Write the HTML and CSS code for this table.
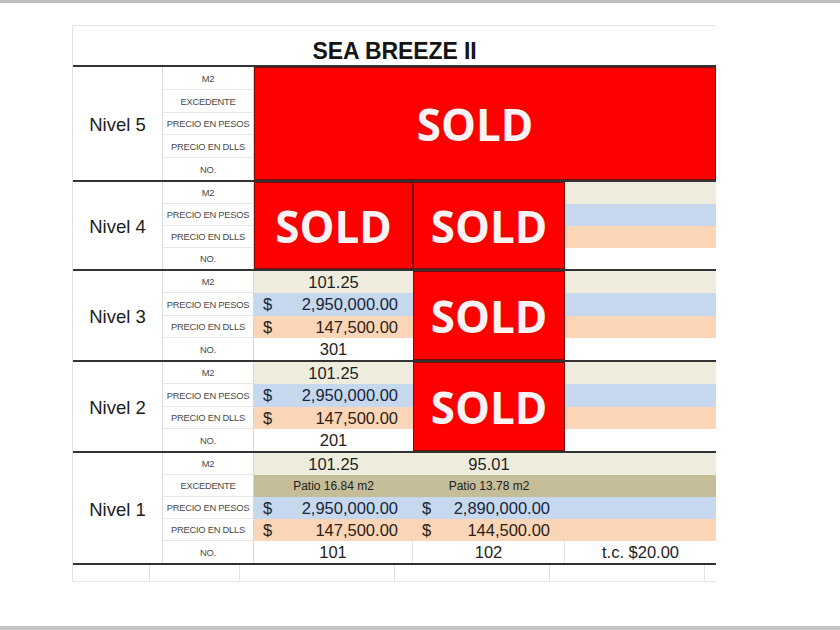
FILE: index.html
```html
<!DOCTYPE html>
<html>
<head>
<meta charset="utf-8">
<link rel="stylesheet" href="styles.css">
</head>
<body>
<div class="topbar"></div>
<div class="sheet">
  <div class="title">SEA BREEZE II</div>

  <div class="level l5">
    <div class="lvl">Nivel 5</div>
    <div class="subs">
      <div class="sub">M2</div>
      <div class="sub">EXCEDENTE</div>
      <div class="sub">PRECIO EN PESOS</div>
      <div class="sub">PRECIO EN DLLS</div>
      <div class="sub">NO.</div>
    </div>
    <div class="data">
      <div class="sold sold-wide">SOLD</div>
    </div>
  </div>

  <div class="level l4">
    <div class="lvl">Nivel 4</div>
    <div class="subs">
      <div class="sub">M2</div>
      <div class="sub">PRECIO EN PESOS</div>
      <div class="sub">PRECIO EN DLLS</div>
      <div class="sub">NO.</div>
    </div>
    <div class="data">
      <div class="sold sold-4">SOLD</div>
      <div class="sold sold-4">SOLD</div>
      <div class="cell beige"></div>
      <div class="cell blue"></div>
      <div class="cell orange"></div>
      <div class="cell white"></div>
    </div>
  </div>

  <div class="level l3">
    <div class="lvl">Nivel 3</div>
    <div class="subs">
      <div class="sub">M2</div>
      <div class="sub">PRECIO EN PESOS</div>
      <div class="sub">PRECIO EN DLLS</div>
      <div class="sub">NO.</div>
    </div>
    <div class="data">
      <div class="cell beige center">101.25</div>
      <div class="sold sold-4">SOLD</div>
      <div class="cell beige"></div>
      <div class="cell blue money"><span>$</span><span>2,950,000.00</span></div>
      <div class="cell blue"></div>
      <div class="cell orange money"><span>$</span><span>147,500.00</span></div>
      <div class="cell orange"></div>
      <div class="cell white center">301</div>
      <div class="cell white"></div>
    </div>
  </div>

  <div class="level l2">
    <div class="lvl">Nivel 2</div>
    <div class="subs">
      <div class="sub">M2</div>
      <div class="sub">PRECIO EN PESOS</div>
      <div class="sub">PRECIO EN DLLS</div>
      <div class="sub">NO.</div>
    </div>
    <div class="data">
      <div class="cell beige center">101.25</div>
      <div class="sold sold-4">SOLD</div>
      <div class="cell beige"></div>
      <div class="cell blue money"><span>$</span><span>2,950,000.00</span></div>
      <div class="cell blue"></div>
      <div class="cell orange money"><span>$</span><span>147,500.00</span></div>
      <div class="cell orange"></div>
      <div class="cell white center">201</div>
      <div class="cell white"></div>
    </div>
  </div>

  <div class="level l1">
    <div class="lvl">Nivel 1</div>
    <div class="subs">
      <div class="sub">M2</div>
      <div class="sub">EXCEDENTE</div>
      <div class="sub">PRECIO EN PESOS</div>
      <div class="sub">PRECIO EN DLLS</div>
      <div class="sub">NO.</div>
    </div>
    <div class="data">
      <div class="cell beige center">101.25</div>
      <div class="cell beige center">95.01</div>
      <div class="cell beige"></div>
      <div class="cell khaki center small">Patio 16.84 m2</div>
      <div class="cell khaki center small">Patio 13.78 m2</div>
      <div class="cell khaki"></div>
      <div class="cell blue money"><span>$</span><span>2,950,000.00</span></div>
      <div class="cell blue money"><span>$</span><span>2,890,000.00</span></div>
      <div class="cell blue"></div>
      <div class="cell orange money"><span>$</span><span>147,500.00</span></div>
      <div class="cell orange money"><span>$</span><span>144,500.00</span></div>
      <div class="cell orange"></div>
      <div class="cell white center grid-r">101</div>
      <div class="cell white center grid-r">102</div>
      <div class="cell white center">t.c. $20.00</div>
    </div>
  </div>

  <div class="empty-row">
    <div class="e e1"></div>
    <div class="e e2"></div>
    <div class="e e3"></div>
    <div class="e e4"></div>
    <div class="e e5"></div>
    <div class="e e6"></div>
  </div>
</div>
<div class="bottombar"></div>
</body>
</html>
```

FILE: styles.css
```css
* { box-sizing: border-box; }
html, body {
  margin: 0;
  padding: 0;
  background: #ffffff;
  width: 840px;
  height: 630px;
  overflow: hidden;
  position: relative;
  font-family: "Liberation Sans", Arial, sans-serif;
}
.topbar {
  height: 3px;
  background: #bdbdbd;
}
.bottombar {
  position: absolute;
  left: 0;
  right: 0;
  bottom: 0;
  height: 4px;
  background: #c4c4c4;
}
.sheet {
  margin: 22px 0 0 72px;
  width: 644px;
  border-left: 1px solid #e2e2e2;
}
.title {
  height: 42px;
  border-top: 1px solid #e4e4e4;
  border-bottom: 2px solid #333333;
  text-align: center;
  font-weight: 700;
  font-size: 23px;
  line-height: 26px;
  padding-top: 12px;
  color: #141414;
  letter-spacing: -0.1px;
}
.level {
  display: flex;
  border-bottom: 2px solid #333333;
}
.l5 { --rows: 23px 23px 22px 23px 22px; }
.l4 { --rows: 22px 22px 22px 21px; }
.l3, .l2 { --rows: 22px 23px 22px 22px; }
.l1 { --rows: 22px 22px 22px 22px 22px; }

.lvl {
  width: 90px;
  display: flex;
  align-items: center;
  justify-content: center;
  padding-top: 3px;
  font-size: 18.5px;
  color: #1c1c1c;
  border-right: 1px solid #dcdcdc;
}
.subs {
  width: 91px;
  display: grid;
  grid-template-rows: var(--rows);
  border-right: 1px solid #d8d8d8;
}
.sub {
  display: flex;
  align-items: center;
  justify-content: center;
  font-size: 9.4px;
  color: #4a4a4a;
  border-bottom: 1px solid #e6e6e6;
  white-space: nowrap;
  letter-spacing: -0.25px;
}
.sub:last-child { border-bottom: none; }

.data {
  width: 462px;
  display: grid;
  grid-template-columns: 159px 152px 151px;
  grid-template-rows: var(--rows);
}
.cell {
  font-size: 16.5px;
  color: #1e1e1e;
  display: flex;
  align-items: center;
  white-space: nowrap;
}
.center { justify-content: center; }
.money {
  justify-content: space-between;
  padding: 0 15px 0 9px;
}
.small { font-size: 12px; }
.beige { background: #eeeddd; }
.blue { background: #c5d8ee; color: #1a2438; }
.orange { background: #fbd5b7; color: #2a1e14; }
.khaki { background: #c4bd98; }
.white { background: #ffffff; }
.grid-r { border-right: 1px solid #e2e2e2; }

.sold {
  background: #fe0000;
  border: 1px solid #7a0b0b;
  color: #fbf3f3;
  font-family: "Open Sans", "Liberation Sans", sans-serif;
  font-weight: 700;
  font-size: 44px;
  display: flex;
  align-items: center;
  justify-content: center;
  text-shadow: 0 0 2px rgba(120, 0, 0, 0.35);
}
.sold-wide {
  grid-column: 1 / 4;
  grid-row: 1 / 6;
  padding-right: 20px;
}
.sold-4 { grid-row: span 4; }

.empty-row {
  display: flex;
  height: 17px;
  border-bottom: 1px solid #e6e6e6;
}
.e { border-right: 1px solid #e3e3e3; }
.e1 { width: 77px; }
.e2 { width: 90px; }
.e3 { width: 155px; }
.e4 { width: 155px; }
.e5 { width: 155px; }
.e6 { width: 11px; border-right: none; }
```
